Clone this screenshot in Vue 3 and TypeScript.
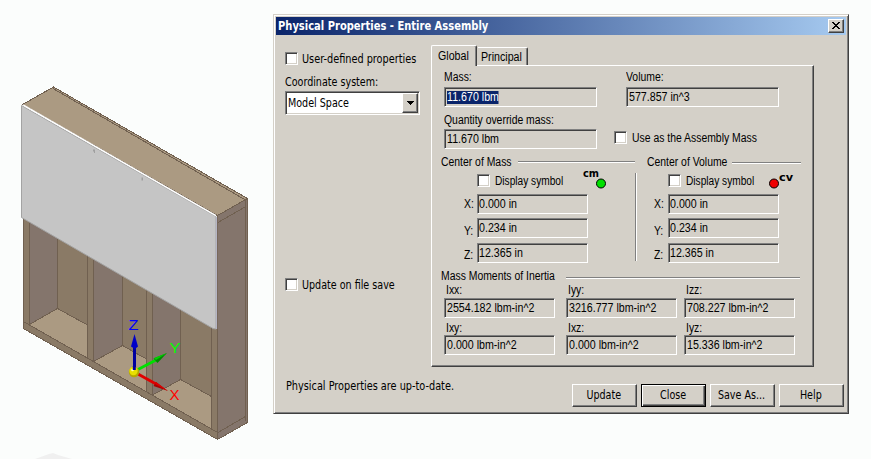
<script setup lang="ts">
interface Entry {
  label: string
  value: string
}

interface Center {
  kind: 'mass' | 'volume'
  title: string
  symbol: string
  coords: Entry[]
}

const coords: Entry[] = [
  { label: 'X:', value: '0.000 in' },
  { label: 'Y:', value: '0.234 in' },
  { label: 'Z:', value: '12.365 in' },
]

const centers: Center[] = [
  { kind: 'mass', title: 'Center of Mass', symbol: 'cm', coords },
  { kind: 'volume', title: 'Center of Volume', symbol: 'cv', coords },
]

const inertia: Entry[] = [
  { label: 'Ixx:', value: '2554.182 lbm-in^2' },
  { label: 'Iyy:', value: '3216.777 lbm-in^2' },
  { label: 'Izz:', value: '708.227 lbm-in^2' },
  { label: 'Ixy:', value: '0.000 lbm-in^2' },
  { label: 'Ixz:', value: '0.000 lbm-in^2' },
  { label: 'Iyz:', value: '15.336 lbm-in^2' },
]

const actions: string[] = ['Update', 'Close', 'Save As...', 'Help']
</script>

<template>
  <main class="screen">
    <svg class="model" width="273" height="459" viewBox="0 0 273 459">
      <path d="M35 459L49 454L53 453L58 455L72 459Z" fill="#f0f0f0" />
      <g stroke="#706050" stroke-width="1" stroke-linejoin="round" shape-rendering="crispEdges">
        <path d="M217.5 215.5L247.5 198.5V422.5L217.5 439.5Z" fill="#84756c" />
        <path d="M245.5 200V421M218 222.5L245 207M218 432.5L245.5 416.5" fill="none" />
        <path d="M23.5 215V328.5L217.5 439.5V320Z" fill="#8a7a66" />
        <g stroke="none">
          <path d="M29.5 210H57.5V308.5L29.5 324.5Z" fill="#84756c" />
          <path d="M93.5 240H122.5V345.5L93.5 362Z" fill="#84756c" />
          <path d="M152.5 280H180.5V379.5L152.5 395Z" fill="#84756c" />
          <path d="M30 325L57.5 308.5L87.5 325V358Z" fill="#ab9a82" />
          <path d="M94 361.5L122.5 345.5L146.5 359V392Z" fill="#ab9a82" />
          <path d="M152.5 395L180.5 379.5L211.5 396.5V429Z" fill="#ab9a82" />
        </g>
        <path
          d="M23.5 321.5L217.5 432.5M29.5 215V324.5L57.5 308.5V220M57.5 308.5L87.5 325M87.5 240V358M93.5 240V361.5L122.5 345.5V260M122.5 345.5L146.5 359M146.5 270V392M152.5 280V395L180.5 379.5V300M180.5 379.5L211.5 396.5M211.5 310V429"
          fill="none"
        />
        <path d="M22.5 104.5L53.5 87L247.5 198.5L217.5 215.5Z" fill="#ab9a82" />
        <path d="M53 88.5L245.5 200" fill="none" />
      </g>
      <path d="M21.5 105.5L216 216.5V329L213 328.5L21.5 217.5Z" fill="#c5c5c5" stroke="#a3a3a3" />
      <path d="M23 104.8L216 215.6" stroke="#fff" stroke-width="1.5" />
      <path d="M216.5 217V329" stroke="#b5b5c5" stroke-width="1.2" />
      <path d="M93 149.5H95V151.5H93ZM94 151H95V153H94ZM141.5 177.5H143V180.5H141.5Z" fill="#a0a0a0" />
      <path d="M138 369.5L157 359.5" stroke="#00e000" stroke-width="2.8" />
      <path d="M153.5 358.5L167 353L157.5 363Z" fill="#008b00" />
      <path d="M154 358L167 353L156 360Z" fill="#00d000" />
      <path d="M138 374L156 384" stroke="#e00000" stroke-width="2.8" />
      <path d="M153.5 386L156 382L168 391Z" fill="#a80000" />
      <path d="M155 384L156 382L168 391Z" fill="#e00000" />
      <path d="M134.5 369V346" stroke="#0000a0" stroke-width="3" />
      <path d="M134.5 334L138 346.5L135 349L131 346.5Z" fill="#0000c8" />
      <circle cx="134" cy="372" r="5.2" fill="#b5aa00" />
      <circle cx="133.5" cy="371" r="4.2" fill="#e8e000" />
      <circle cx="132.5" cy="370" r="1.3" fill="#ffffb0" />
      <path d="M134.3 370V366" stroke="#0000a0" stroke-width="3" />
      <text class="axis" x="128.5" y="330" textLength="10" lengthAdjust="spacingAndGlyphs" fill="#0000ff">Z</text>
      <text class="axis" x="169.5" y="353" textLength="11" lengthAdjust="spacingAndGlyphs" fill="#00ff00">Y</text>
      <text class="axis" x="169.5" y="400" textLength="10" lengthAdjust="spacingAndGlyphs" fill="#ff0000">X</text>
    </svg>

    <section class="dialog">
      <header class="titlebar">
        <h1 class="title">Physical Properties - Entire Assembly</h1>
        <button class="close" aria-label="Close">
          <svg width="8" height="7" viewBox="0 0 8 7" shape-rendering="crispEdges">
            <path d="M0 0H2V1H3V2H5V1H6V0H8V1H7V2H6V3H5V4H6V5H7V6H8V7H6V6H5V5H3V6H2V7H0V6H1V5H2V4H3V3H2V2H1V1H0Z" />
          </svg>
        </button>
      </header>

      <div class="body">
        <aside class="side">
          <label class="check"><i class="box"></i><span class="ui wide">User-defined properties</span></label>
          <span class="ui combo-label">Coordinate system:</span>
          <div class="combo">
            <span class="ui">Model Space</span>
            <button class="drop" aria-label="Open">
              <svg width="7" height="4" viewBox="0 0 7 4" shape-rendering="crispEdges"><path d="M0 0H7V1H6V2H5V3H4V4H3V3H2V2H1V1H0Z" /></svg>
            </button>
          </div>
          <label class="check save"><i class="box"></i><span class="ui">Update on file save</span></label>
        </aside>

        <div class="tabs">
          <nav class="tablist">
            <button class="tab active"><span class="ms">Global</span></button>
            <button class="tab"><span class="ms">Principal</span></button>
          </nav>
          <div class="panel">
            <div class="totals">
              <div class="entry">
                <span class="ms">Mass:</span>
                <div class="field"><span class="ms selected">11.670 lbm</span></div>
              </div>
              <div class="entry">
                <span class="ms">Volume:</span>
                <div class="field"><span class="ms">577.857 in^3</span></div>
              </div>
              <div class="entry override">
                <span class="ms">Quantity override mass:</span>
                <div class="field"><span class="ms">11.670 lbm</span></div>
              </div>
              <label class="check use"><i class="box"></i><span class="ms">Use as the Assembly Mass</span></label>
            </div>

            <div class="centers">
              <section v-for="c in centers" :key="c.kind" class="center" :class="c.kind">
                <div class="legend"><span class="ms">{{ c.title }}</span><i class="rule"></i></div>
                <div class="symbol-row">
                  <label class="check"><i class="box"></i><span class="ms">Display symbol</span></label>
                  <svg class="symbol" width="26" height="24" viewBox="0 -4 26 24">
                    <template v-if="c.kind === 'mass'">
                      <text class="sym" x="0" y="7" textLength="16" lengthAdjust="spacingAndGlyphs">{{ c.symbol }}</text>
                      <circle cx="18" cy="13.5" r="4.5" fill="#00e000" stroke="#000" />
                    </template>
                    <template v-else>
                      <circle cx="5" cy="13.5" r="4.5" fill="#f00000" stroke="#000" />
                      <text class="sym" x="10" y="11" textLength="14" lengthAdjust="spacingAndGlyphs">{{ c.symbol }}</text>
                    </template>
                  </svg>
                </div>
                <div class="coords">
                  <div v-for="p in c.coords" :key="p.label" class="coord">
                    <span class="ms">{{ p.label }}</span>
                    <div class="field"><span class="ms">{{ p.value }}</span></div>
                  </div>
                </div>
              </section>
            </div>

            <div class="legend moments"><span class="ms">Mass Moments of Inertia</span><i class="rule"></i></div>
            <div class="inertia">
              <div v-for="m in inertia" :key="m.label" class="moment">
                <span class="ms">{{ m.label }}</span>
                <div class="field"><span class="ms">{{ m.value }}</span></div>
              </div>
            </div>
          </div>
        </div>
      </div>

      <footer class="footer">
        <span class="ui wide status">Physical Properties are up-to-date.</span>
        <div class="actions">
          <button v-for="a in actions" :key="a" class="action" :class="{ primary: a === 'Close' }">
            <span class="ui">{{ a }}</span>
          </button>
        </div>
      </footer>
    </section>
  </main>
</template>

<style>
body {
  margin: 0;
  background: #fbfdfc;
}
</style>

<style scoped>
* {
  box-sizing: border-box;
}
.screen {
  display: flex;
  width: 871px;
  height: 459px;
  overflow: hidden;
  background: #fbfdfc;
  color: #000;
}
.model {
  flex: none;
}
.axis {
  font: 14px "Liberation Sans", sans-serif;
}
.sym {
  font: bold 10px "DejaVu Sans", sans-serif;
}
button {
  padding: 0;
  margin: 0;
  border: 0;
  background: #d4d0c8;
  color: #000;
}
.ui {
  display: inline-block;
  font: 11.5px/13px "DejaVu Sans Condensed", "DejaVu Sans", sans-serif;
  white-space: nowrap;
  transform: scaleX(0.925);
  transform-origin: 0 50%;
}
.ui.wide {
  transform: scaleX(0.94);
}
.ms {
  display: inline-block;
  font: 12px/13px "Liberation Sans", Arial, sans-serif;
  white-space: nowrap;
  transform: scaleX(0.867);
  transform-origin: 0 50%;
}
.field .ms,
.tab .ms {
  transform: scaleX(0.888);
}
.symbol-row .ms {
  transform: scaleX(0.845);
}
.dialog {
  flex: none;
  width: 576px;
  height: 400px;
  margin-top: 14px;
  padding: 1px;
  background: #d4d0c8;
  border: 1px solid;
  border-color: #d4d0c8 #404040 #404040 #d4d0c8;
  box-shadow: inset 1px 1px #fff, inset -1px -1px #808080;
  display: flex;
  flex-direction: column;
}
.titlebar {
  flex: none;
  display: flex;
  align-items: center;
  justify-content: space-between;
  height: 18px;
  margin: 1px 1px 0;
  padding: 0 2px;
  background: linear-gradient(90deg, #0a246a, #a6caf0);
}
.title {
  margin: 0;
  color: #fff;
  font: bold 11.5px/18px "DejaVu Sans Condensed", "DejaVu Sans", sans-serif;
  white-space: nowrap;
  transform: scaleX(0.962);
  transform-origin: 0 50%;
}
.close,
.drop,
.action {
  display: flex;
  align-items: center;
  justify-content: center;
  border: 1px solid;
  border-color: #fff #404040 #404040 #fff;
  box-shadow: inset -1px -1px #808080;
}
.close {
  width: 16px;
  height: 14px;
  padding: 0 1px 1px 0;
}
.body {
  flex: none;
  display: flex;
  height: 332px;
  padding: 0 0 0 10px;
}
.side {
  flex: none;
  width: 146px;
  padding-top: 17px;
  display: flex;
  flex-direction: column;
  align-items: flex-start;
}
.check {
  display: flex;
  align-items: center;
  height: 13px;
  gap: 5px;
}
.check .ms {
  margin-top: 2px;
}
.side .check {
  gap: 4px;
}
.side .check .ui {
  padding-top: 1px;
}
.box {
  flex: none;
  width: 13px;
  height: 13px;
  background: #fff;
  border: 1px solid;
  border-color: #808080 #fff #fff #808080;
  box-shadow: inset 1px 1px #404040, inset -1px -1px #d4d0c8;
}
.combo-label {
  margin-top: 11px;
}
.combo {
  display: flex;
  justify-content: space-between;
  align-items: center;
  width: 135px;
  height: 24px;
  margin-top: 2px;
  padding: 1px 1px 1px 2px;
  background: #fff;
  border: 1px solid;
  border-color: #808080 #fff #fff #808080;
  box-shadow: inset 1px 1px #404040, inset -1px -1px #d4d0c8;
}
.drop {
  width: 16px;
  height: 20px;
}
.save {
  margin-top: 163px;
}
.tabs {
  flex: none;
  width: 383px;
  padding-top: 10px;
}
.tablist {
  display: flex;
  align-items: flex-end;
  height: 20px;
}
.tab {
  height: 18px;
  width: 50px;
  margin-left: 1px;
  border-top: 1px solid #fff;
  border-right: 1px solid #404040;
  box-shadow: inset -1px 0 #808080;
  border-radius: 0 2px 0 0;
  text-align: left;
  padding: 0 0 0 3px;
}
.tab.active {
  position: relative;
  width: 46px;
  height: 21px;
  margin: 0 0 -1px;
  border-left: 1px solid #fff;
  border-radius: 2px 2px 0 0;
  padding: 0 0 2px 6px;
}
.panel {
  width: 383px;
  height: 302px;
  padding: 5px 0 0 9px;
  border: 1px solid;
  border-color: #fff #404040 #404040 #fff;
  box-shadow: inset -1px -1px #808080;
}
.totals {
  display: grid;
  grid-template-columns: 153px 153px;
  grid-template-rows: 36px 42px;
  column-gap: 29px;
  padding-left: 3px;
}
.entry {
  display: flex;
  flex-direction: column;
  justify-content: flex-end;
  gap: 3px;
}
.entry.override {
  gap: 2px;
}
.entry > .ms {
  align-self: flex-start;
}
.field {
  flex: none;
  display: flex;
  align-items: center;
  height: 20px;
  padding-left: 2px;
  border: 1px solid;
  border-color: #808080 #fff #fff #808080;
  box-shadow: inset 1px 1px #404040;
}
.selected {
  background: #0a246a;
  color: #fff;
}
.use {
  margin: 24px 0 0 -12px;
}
.centers {
  display: flex;
  height: 121px;
  background: linear-gradient(90deg, #808080 50%, #fff 50%) no-repeat 194px 24px / 2px 88px;
}
.center {
  width: 194px;
  flex: none;
}
.center.volume {
  width: 164px;
  margin-left: 12px;
}
.legend {
  display: flex;
  align-items: center;
  height: 13px;
}
.rule {
  height: 2px;
  border-top: 1px solid #808080;
  border-bottom: 1px solid #fff;
}
.center .legend {
  margin-top: 6px;
}
.legend .ms {
  flex: none;
  width: 77px;
}
.center .legend .ms {
  margin-top: 2px;
}
.mass .rule {
  width: 117px;
}
.volume .legend .ms {
  width: 85px;
}
.volume .rule {
  width: 69px;
  margin-top: 3px;
}
.symbol-row {
  display: flex;
  align-items: flex-start;
  height: 26px;
  padding-left: 36px;
}
.symbol-row .check {
  width: 106px;
  margin-top: 6px;
}
.volume .symbol-row {
  padding-left: 21px;
}
.volume .symbol-row .check {
  width: 101px;
}
.symbol {
  flex: none;
  margin-top: -2px;
}
.coords {
  display: grid;
  grid-template-rows: 24px 25px 20px;
  width: 147px;
}
.mass .coords {
  padding-left: 23px;
}
.volume .coords {
  width: 132px;
  padding-left: 8px;
}
.coord {
  display: grid;
  grid-template-columns: 13px 111px;
  align-items: start;
}
.coord > .ms {
  margin-top: 4px;
}
.coord + .coord > .ms {
  margin-top: 7px;
}
.coord + .coord + .coord > .ms {
  margin-top: 6px;
}
.volume .coord > .ms {
  margin-left: -1px;
}
.coord .field {
  padding-left: 1px;
}
.moments .ms {
  width: 125px;
}
.moments .rule {
  width: 234px;
  margin-top: 3px;
}
.inertia {
  display: grid;
  grid-template-columns: 122px 118px 111px;
  grid-template-rows: 35px 37px;
  padding-left: 3px;
}
.moment {
  display: flex;
  flex-direction: column;
  justify-content: flex-end;
  gap: 1px;
}
.moment:nth-child(n + 4) {
  gap: 0;
}
.moment .field {
  width: 111px;
}
.moment > .ms {
  align-self: flex-start;
  margin-left: 2px;
}
.footer {
  flex: none;
  display: flex;
  justify-content: space-between;
  padding: 17px 3px 0 11px;
}
.status {
  margin-top: -4px;
}
.actions {
  display: flex;
  gap: 4px;
}
.action {
  width: 65px;
  height: 23px;
  padding-right: 1px;
}
.action .ui {
  transform-origin: 50% 50%;
}
.action.primary {
  border-color: #000;
  box-shadow: inset 1px 1px #fff, inset -1px -1px #404040, inset -2px -2px #808080;
}
</style>
